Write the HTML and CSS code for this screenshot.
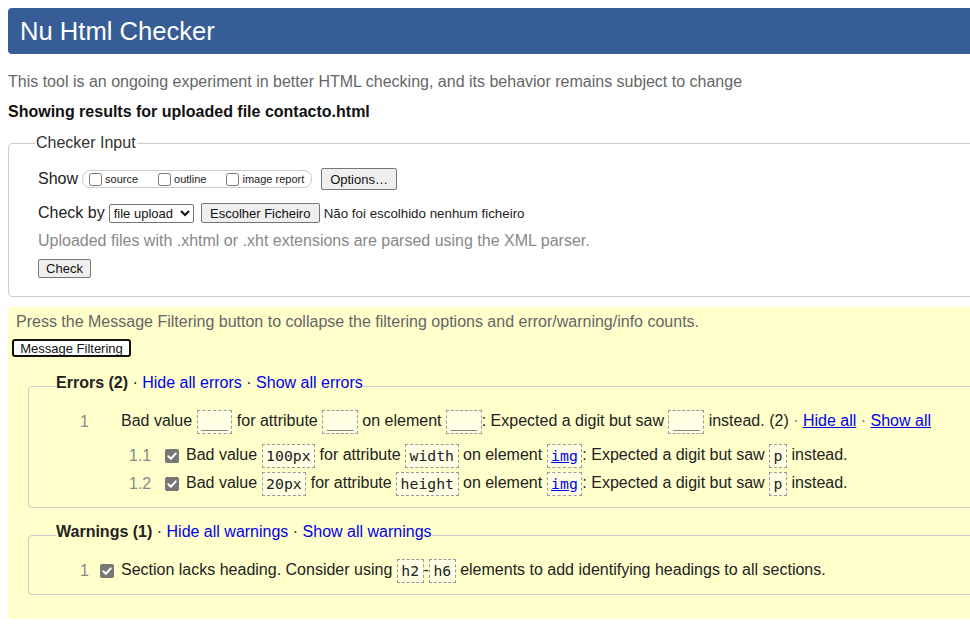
FILE: index.html
```html
<!DOCTYPE html>
<html lang="pt">
<head>
<meta charset="utf-8">
<title>Nu Html Checker</title>
<link rel="stylesheet" href="styles.css">
</head>
<body>
<h1 class="title">Nu Html Checker</h1>
<p class="intro">This tool is an ongoing experiment in better HTML checking, and its behavior remains subject to change</p>
<p class="showing">Showing results for uploaded file contacto.html</p>
<fieldset class="input-box">
  <legend class="input-legend">Checker Input</legend>
  <div class="row show-row">
    <span class="lbl">Show</span>
    <span class="pill">
      <label class="opt"><input type="checkbox" class="cb">source</label>
      <label class="opt"><input type="checkbox" class="cb">outline</label>
      <label class="opt"><input type="checkbox" class="cb">image report</label>
    </span>
    <button class="btn opts" type="button">Options…</button>
  </div>
  <div class="row by-row">
    <span class="lbl">Check by</span>
    <select class="sel"><option>file upload</option></select>
    <button class="btn file" type="button">Escolher Ficheiro</button>
    <span class="nofile">Não foi escolhido nenhum ficheiro</span>
  </div>
  <p class="hint">Uploaded files with .xhtml or .xht extensions are parsed using the XML parser.</p>
  <button class="btn check" type="button">Check</button>
</fieldset>
<div class="details">
  <p class="press">Press the Message Filtering button to collapse the filtering options and error/warning/info counts.</p>
  <button class="filter-btn" type="button">Message Filtering</button>
  <fieldset class="group errors">
    <legend class="group-legend"><strong>Errors (2)</strong> · <a class="plain" href="#">Hide all errors</a> · <a class="plain" href="#">Show all errors</a></legend>
    <div class="msg top">
      <span class="num">1</span>
      <span class="text">Bad value <code class="c">___</code> for attribute <code class="c">___</code> on element <code class="c">___</code>: Expected a digit but saw <code class="c">___</code> instead. (2) <span class="dot">·</span> <a href="#">Hide all</a> <span class="dot">·</span> <a href="#">Show all</a></span>
    </div>
    <div class="msg sub first">
      <span class="num">1.1</span>
      <span class="tick"><svg width="14" height="14" viewBox="0 0 14 14"><path d="M3.3 7.2 L5.9 9.7 L10.8 4.4" fill="none" stroke="#fff" stroke-width="2" stroke-linecap="round" stroke-linejoin="round"/></svg></span>
      <span class="text">Bad value <code class="c">100px</code> for attribute <code class="c">width</code> on element <code class="c"><a href="#">img</a></code>: Expected a digit but saw <code class="c">p</code> instead.</span>
    </div>
    <div class="msg sub second">
      <span class="num">1.2</span>
      <span class="tick"><svg width="14" height="14" viewBox="0 0 14 14"><path d="M3.3 7.2 L5.9 9.7 L10.8 4.4" fill="none" stroke="#fff" stroke-width="2" stroke-linecap="round" stroke-linejoin="round"/></svg></span>
      <span class="text">Bad value <code class="c">20px</code> for attribute <code class="c">height</code> on element <code class="c"><a href="#">img</a></code>: Expected a digit but saw <code class="c">p</code> instead.</span>
    </div>
  </fieldset>
  <fieldset class="group warnings">
    <legend class="group-legend"><strong>Warnings (1)</strong> · <a class="plain" href="#">Hide all warnings</a> · <a class="plain" href="#">Show all warnings</a></legend>
    <div class="msg warn">
      <span class="num">1</span>
      <span class="tick"><svg width="14" height="14" viewBox="0 0 14 14"><path d="M3.3 7.2 L5.9 9.7 L10.8 4.4" fill="none" stroke="#fff" stroke-width="2" stroke-linecap="round" stroke-linejoin="round"/></svg></span>
      <span class="text">Section lacks heading. Consider using <code class="c">h2</code>-<code class="c">h6</code> elements to add identifying headings to all sections.</span>
    </div>
  </fieldset>
</div>
</body>
</html>
```

FILE: styles.css
```css
html {
  overflow: hidden;
}

body {
  margin: 8px 0 0 8px;
  font-family: "Liberation Sans", Arial, sans-serif;
  font-size: 16px;
  color: #222;
  background: #fff;
}

.title {
  margin: 0 -40px 0 0;
  height: 46px;
  line-height: 46px;
  padding: 0 12px;
  background: #365d95;
  color: #fff;
  font-weight: normal;
  font-size: 25.6px;
  border-radius: 4px;
}

.intro {
  margin: 19px 0 0;
  line-height: 18px;
  color: #666;
}

.showing {
  margin: 12px 0 0;
  line-height: 18px;
  font-weight: bold;
  color: #111;
}

.input-box {
  margin: 13px -40px 0 0;
  padding: 0 0 18px 29px;
  border: 1px solid #ccc;
  border-radius: 4px;
  min-width: 0;
}

.input-legend {
  padding: 0 1px;
  margin-left: -3px;
  line-height: 18px;
  color: #333;
}

.row {
  display: flex;
  align-items: center;
  height: 24px;
}

.show-row {
  margin-top: 15px;
}

.by-row {
  margin-top: 10px;
}

.lbl {
  color: #222;
  margin-right: 4px;
}

.pill {
  display: inline-flex;
  align-items: center;
  height: 18px;
  border: 1px solid #ccc;
  border-radius: 8px;
  padding: 0 6px 0 6px;
  font-size: 11px;
  color: #222;
  box-sizing: border-box;
  width: 230px;
}

.opt {
  display: inline-flex;
  align-items: center;
}

.opt + .opt {
  margin-left: 20px;
}

.cb {
  width: 13px;
  height: 13px;
  margin: 0 3px 0 0;
}

.btn {
  font-family: "Liberation Sans", Arial, sans-serif;
  font-size: 13px;
  color: #111;
  background: #efefef;
  border: 1px solid #767676;
  border-radius: 2px;
  padding: 0 6px;
  box-sizing: border-box;
}

.opts {
  margin-left: 9px;
  height: 22px;
  width: 76px;
}

.sel {
  font-family: "Liberation Sans", Arial, sans-serif;
  font-size: 13px;
  height: 19px;
  width: 85px;
  margin: 0 7px 0 0;
  padding: 0;
  color: #111;
  background: #fff;
  border: 1px solid #767676;
  border-radius: 2px;
}

.file {
  height: 20px;
  width: 119px;
  margin-right: 4px;
}

.nofile {
  font-size: 13.33px;
  color: #222;
}

.hint {
  margin: 7px 0 0;
  line-height: 18px;
  color: #888;
}

.check {
  display: block;
  margin-top: 9px;
  height: 19px;
  width: 53px;
}

.details {
  margin: 10px -40px 0 0;
  background: #ffffcc;
  padding: 6px 0 24px 8px;
}

.press {
  margin: 0;
  line-height: 18px;
  color: #666;
}

.filter-btn {
  display: block;
  margin: 8px 0 0 -4px;
  height: 18px;
  width: 119px;
  padding: 0;
  font-family: "Liberation Sans", Arial, sans-serif;
  font-size: 13px;
  color: #111;
  background: #fff;
  border: 2px solid #111;
  border-radius: 3px;
  box-sizing: border-box;
}

.group {
  margin: 17px 0 0 12px;
  padding: 0 0 11px 27px;
  border: 1px solid #c8c8d0;
  border-radius: 4px;
  min-width: 0;
}

.warnings {
  margin-top: 15px;
}

.group-legend {
  padding: 0 0 6px;
  margin-left: 0;
  line-height: 18px;
  color: #222;
  white-space: nowrap;
}

.group-legend strong {
  font-weight: bold;
}

a {
  color: #0000ee;
}

a.plain {
  text-decoration: none;
}

.msg {
  display: flex;
  align-items: center;
  height: 24px;
  white-space: nowrap;
}

.msg.top {
  margin: 12px 0 0 24px;
}

.msg.sub {
  margin-left: 73px;
}

.msg.first {
  margin-top: 10px;
}

.msg.second {
  margin-top: 4px;
}

.msg.warn {
  margin: 12px 0 0 24px;
}

.num {
  color: #888;
  flex: none;
}

.top .num {
  width: 41px;
}

.sub .num {
  width: 36px;
}

.warn .num {
  width: 20px;
}

.tick {
  flex: none;
  width: 14px;
  height: 14px;
  background: #777;
  border-radius: 2px;
  margin-right: 7px;
  display: flex;
}

.text {
  color: #222;
}

.dot {
  color: #777;
}

.c {
  display: inline-block;
  vertical-align: middle;
  font-family: "DejaVu Sans Mono", "Liberation Mono", monospace;
  font-size: 14.8px;
  line-height: 22px;
  border: 1px dashed #999;
  background: #ffffe4;
  padding: 0 3.5px;
  color: #222;
}
```
